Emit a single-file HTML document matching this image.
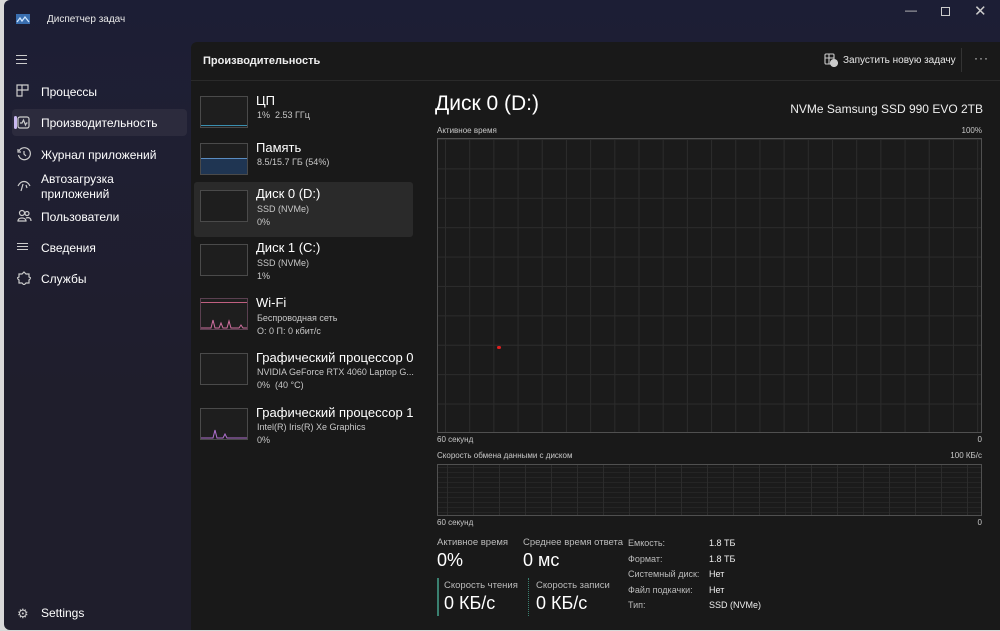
<!DOCTYPE html>
<html><head><meta charset="utf-8"><style>
*{margin:0;padding:0;box-sizing:border-box}
body{width:1000px;height:631px;overflow:hidden;background:#d9d9d9;font-family:"Segoe UI","Liberation Sans","Noto Sans CJK SC",sans-serif;color:#fff;position:relative}
.win{position:absolute;left:4px;top:0;width:996px;height:630px;background:linear-gradient(#1c1e35 0,#1f1f33 120px,#1f1e2c 400px);border-radius:6px 0 0 6px;overflow:hidden}
.t{position:absolute;white-space:nowrap}
.content{position:absolute;left:187px;top:42px;width:809px;height:588px;background:#191919;border-top-left-radius:6px}
.nav{font-size:12px;color:#fff}
.thumb{position:absolute;left:9px;width:48px;height:32px;border:1px solid #4a4a4a;background:#1e1e1e}
.grid{position:absolute;border:1px solid #505050;background-color:#1b1b1b}
.small{font-size:8px;color:#c8c8c8}
.lab{font-size:10px;color:#bbb}
.big{font-size:18px;color:#fff}
</style></head><body>
<div class="win">
 <svg class="t" style="left:12px;top:14px" width="14" height="10"><rect width="14" height="10" fill="#3a6fb0"/><path d="M1 8 L4 4 L6 7 L9 3 L13 8" stroke="#cfe6ff" fill="none" stroke-width="1.3"/></svg>
 <div class="t" style="left:43px;top:14px;font-size:10px;color:#e8e8e8">Диспетчер задач</div>
 <div class="t" style="left:901px;top:3px;font-size:12px;color:#ccc">—</div>
 <div class="t" style="left:937px;top:7px;width:9px;height:9px;border:1px solid #ccc"></div>
 <div class="t" style="left:970px;top:2px;font-size:15px;color:#ccc">✕</div>
 <div class="t" style="left:12px;top:55px;width:11px;height:1px;background:#ccc;box-shadow:0 4px 0 #ccc,0 8px 0 #ccc"></div>
 <svg class="t" style="left:12px;top:84px" width="14" height="14" fill="none" stroke="#ccc" stroke-width="1.2"><path d="M1 1h5v5H1zM6 1h6v5H6M1 6v6h5V6"/></svg>
 <div class="t nav" style="left:37px;top:85px">Процессы</div>
 <div class="t" style="left:8px;top:109px;width:175px;height:27px;background:#2c2b3d;border-radius:4px"></div>
 <div class="t" style="left:10px;top:116px;width:3px;height:13px;background:#c9b8f0;border-radius:2px"></div>
 <svg class="t" style="left:13px;top:116px" width="14" height="14" fill="none" stroke="#ccc" stroke-width="1.2"><rect x="1" y="1" width="11" height="11" rx="2"/><path d="M3 7h2l1.5-3 2 5 1-2h1"/></svg>
 <div class="t nav" style="left:37px;top:116px">Производительность</div>
 <svg class="t" style="left:13px;top:147px" width="14" height="14" fill="none" stroke="#ccc" stroke-width="1.2"><path d="M2 4A6 6 0 1 1 1.5 8M1 2v3h3M7 4v3l2 2"/></svg>
 <div class="t nav" style="left:37px;top:148px">Журнал приложений</div>
 <svg class="t" style="left:13px;top:178px" width="14" height="14" fill="none" stroke="#ccc" stroke-width="1.2"><path d="M1 8c3-6 9-6 12 0M6 6l-2 7M9 7l1 3"/></svg>
 <div class="t nav" style="left:37px;top:172px;line-height:15px">Автозагрузка<br>приложений</div>
 <svg class="t" style="left:13px;top:209px" width="15" height="14" fill="none" stroke="#ccc" stroke-width="1.2"><circle cx="5" cy="4" r="2.5"/><circle cx="10" cy="4.5" r="2"/><path d="M1 12c0-4 8-4 8 0zM9 9c3-1 5 0 5 3"/></svg>
 <div class="t nav" style="left:37px;top:210px">Пользователи</div>
 <div class="t" style="left:13px;top:243px;width:11px;height:1.3px;background:#ccc;box-shadow:0 3px 0 #ccc,0 6px 0 #ccc"></div>
 <div class="t nav" style="left:37px;top:241px">Сведения</div>
 <svg class="t" style="left:13px;top:271px" width="14" height="14" fill="none" stroke="#ccc" stroke-width="1.2"><path d="M7 1l2 2 3 0 0 3 2 1-2 2 0 3-3 0-2 2-2-2-3 0 0-3-2-2 2-1 0-3 3 0z"/></svg>
 <div class="t nav" style="left:37px;top:272px">Службы</div>
 <div class="t" style="left:13px;top:606px;font-size:13px;color:#ccc">⚙</div>
 <div class="t nav" style="left:37px;top:606px">Settings</div>
 <div class="content">
  <div class="t" style="left:12px;top:13px;font-size:11px;font-weight:bold;color:#eee">Производительность</div>
  <svg class="t" style="left:633px;top:11px" width="14" height="14" fill="none" stroke="#ccc" stroke-width="1.1"><rect x="1" y="1" width="9" height="10" rx="1"/><path d="M1 5h9M5 1v10"/><circle cx="10" cy="10" r="3.5" fill="#ccc"/></svg>
  <div class="t" style="left:652px;top:13px;font-size:10px;color:#e8e8e8">Запустить новую задачу</div>
  <div class="t" style="left:770px;top:6px;width:1px;height:24px;background:#333"></div>
  <div class="t" style="left:783px;top:9px;font-size:12px;color:#ddd;letter-spacing:1px">···</div>
  <div class="t" style="left:0;top:38px;width:809px;height:1px;background:#2a2a2a"></div>
  <div class="thumb" style="top:54px"><div style="position:absolute;bottom:1px;left:0;right:0;height:2px;border-bottom:1px solid #3a8fb0"></div></div>
  <div class="t" style="left:65px;top:51px;font-size:13px">ЦП</div>
  <div class="t small" style="left:66px;top:68px;font-size:9px">1%&nbsp; 2.53 ГГц</div>
  <div class="thumb" style="top:101px"><div style="position:absolute;bottom:0;left:0;right:0;height:16px;background:#1f3552;border-top:1px solid #5a8cc0"></div></div>
  <div class="t" style="left:65px;top:98px;font-size:13px">Память</div>
  <div class="t small" style="left:66px;top:115px;font-size:9px">8.5/15.7 ГБ (54%)</div>
  <div class="t" style="left:3px;top:140px;width:219px;height:55px;background:#2a2a2a;border-radius:3px"></div>
  <div class="thumb" style="top:148px"></div>
  <div class="t" style="left:65px;top:144px;font-size:13px">Диск 0 (D:)</div>
  <div class="t small" style="left:66px;top:162px;font-size:9px">SSD (NVMe)</div>
  <div class="t small" style="left:66px;top:175px;font-size:9px">0%</div>
  <div class="thumb" style="top:202px"></div>
  <div class="t" style="left:65px;top:198px;font-size:13px">Диск 1 (C:)</div>
  <div class="t small" style="left:66px;top:216px;font-size:9px">SSD (NVMe)</div>
  <div class="t small" style="left:66px;top:229px;font-size:9px">1%</div>
  <div class="thumb" style="top:256px;border-color:#5a4050"><div style="position:absolute;top:3px;left:0;right:0;height:1px;background:#c06080"></div>
   <svg style="position:absolute;left:0;bottom:0" width="46" height="14"><path d="M0 13 L10 13 L12 5 L14 13 L18 13 L20 8 L22 13 L26 13 L28 6 L30 13 L38 13 L40 10 L42 13 L46 13" stroke="#d070a0" fill="none" stroke-width="1"/></svg></div>
  <div class="t" style="left:65px;top:253px;font-size:13px">Wi-Fi</div>
  <div class="t small" style="left:66px;top:271px;font-size:9px">Беспроводная сеть</div>
  <div class="t small" style="left:66px;top:284px;font-size:9px">О: 0 П: 0 кбит/с</div>
  <div class="thumb" style="top:311px"></div>
  <div class="t" style="left:65px;top:308px;font-size:13px">Графический процессор 0</div>
  <div class="t small" style="left:66px;top:325px;font-size:9px">NVIDIA GeForce RTX 4060 Laptop G...</div>
  <div class="t small" style="left:66px;top:338px;font-size:9px">0%&nbsp; (40 °C)</div>
  <div class="thumb" style="top:366px"><svg style="position:absolute;left:0;bottom:0" width="46" height="14"><path d="M0 13 L12 13 L14 5 L16 13 L22 13 L24 9 L26 13 L46 13" stroke="#b070d0" fill="none" stroke-width="1"/></svg></div>
  <div class="t" style="left:65px;top:363px;font-size:13px">Графический процессор 1</div>
  <div class="t small" style="left:66px;top:380px;font-size:9px">Intel(R) Iris(R) Xe Graphics</div>
  <div class="t small" style="left:66px;top:393px;font-size:9px">0%</div>
  <div class="t" style="left:244px;top:50px;font-size:21px;color:#fff">Диск 0 (D:)</div>
  <div class="t" style="right:17px;top:60px;font-size:12px;color:#eee">NVMe Samsung SSD 990 EVO 2TB</div>
  <div class="t small" style="left:246px;top:84px">Активное время</div>
  <div class="t small" style="right:18px;top:84px">100%</div>
  <div class="grid" style="left:246px;top:96px;width:545px;height:295px;background-image:linear-gradient(90deg,#2c2c2c 1px,transparent 1px),linear-gradient(#2c2c2c 1px,transparent 1px);background-size:24.2px 100%,100% 29.4px;background-position:7px 0,0 0"></div>
  <div class="t" style="left:306px;top:304px;width:4px;height:3px;background:#e02020;border-radius:2px"></div>
  <div class="t small" style="left:246px;top:393px">60 секунд</div>
  <div class="t small" style="right:18px;top:393px">0</div>
  <div class="t small" style="left:246px;top:409px">Скорость обмена данными с диском</div>
  <div class="t small" style="right:18px;top:409px">100 КБ/с</div>
  <div class="grid" style="left:246px;top:422px;width:545px;height:52px;background-image:linear-gradient(90deg,#2c2c2c 1px,transparent 1px),linear-gradient(#252525 1px,transparent 1px);background-size:26px 100%,100% 5px;background-position:9px 0,0 2px"></div>
  <div class="t small" style="left:246px;top:476px">60 секунд</div>
  <div class="t small" style="right:18px;top:476px">0</div>
  <div class="t lab" style="left:246px;top:495px;font-size:9.5px">Активное время</div>
  <div class="t big" style="left:246px;top:508px">0%</div>
  <div class="t lab" style="left:332px;top:495px;font-size:9.5px">Среднее время ответа</div>
  <div class="t big" style="left:332px;top:508px">0 мс</div>
  <div class="t" style="left:246px;top:536px;width:2px;height:38px;background:#3a8070"></div>
  <div class="t lab" style="left:253px;top:538px;font-size:9.5px">Скорость чтения</div>
  <div class="t big" style="left:253px;top:551px">0 КБ/с</div>
  <div class="t" style="left:337px;top:536px;width:1px;height:38px;border-left:1px dotted #3a8070"></div>
  <div class="t lab" style="left:345px;top:538px;font-size:9.5px">Скорость записи</div>
  <div class="t big" style="left:345px;top:551px">0 КБ/с</div>
  <div class="t lab" style="left:437px;top:494px;font-size:9px;line-height:15.5px">Емкость:<br>Формат:<br>Системный диск:<br>Файл подкачки:<br>Тип:</div>
  <div class="t" style="left:518px;top:494px;font-size:9px;line-height:15.5px;color:#eee">1.8 ТБ<br>1.8 ТБ<br>Нет<br>Нет<br>SSD (NVMe)</div>
 </div>
</div>
</body></html>
